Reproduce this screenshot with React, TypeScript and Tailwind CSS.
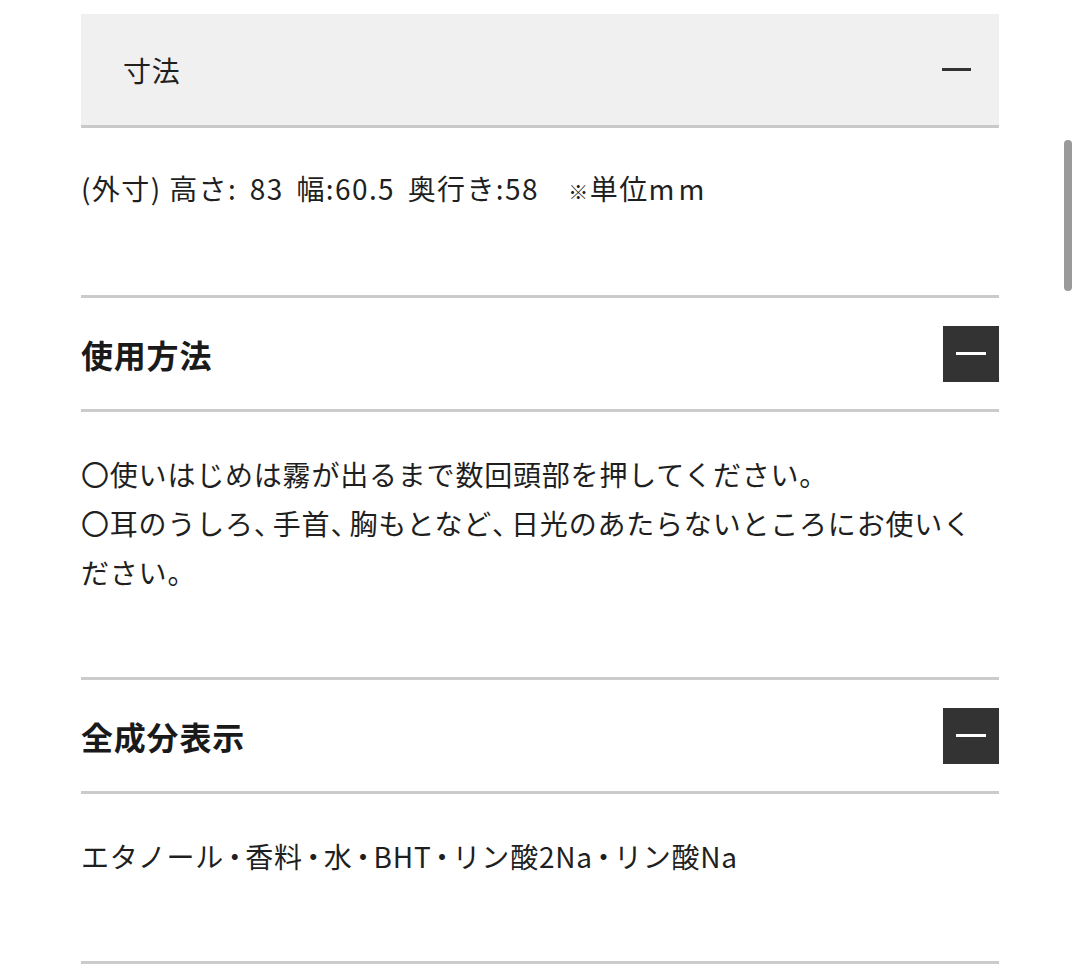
import React from 'react';

const font = { fontFamily: '"Noto Sans CJK JP", "Noto Sans", sans-serif' };

// narrow punctuation, like the proportional 、 and ・ of the page font
const Ten: React.FC = () => (
  <span className="inline-block w-[19px] tracking-normal [font-feature-settings:'halt']">、</span>
);
const Dot: React.FC = () => (
  <span className="inline-block w-[21px] text-center tracking-normal [font-feature-settings:'halt']">・</span>
);

const MinusBox: React.FC = () => (
  <div className="w-[56px] h-[56px] bg-[#333333] flex items-center justify-center">
    <span className="block w-[30px] h-[3px] bg-white" />
  </div>
);

interface SectionProps {
  title: string;
  children: React.ReactNode;
}

const Section: React.FC<SectionProps> = ({ title, children }) => (
  <div>
    <div className="h-[114px] flex items-center justify-between border-b-[3px] border-[#cbcbcb]">
      <h3 className="text-[32px] font-bold tracking-[0.8px] text-[#1a1a1a]">{title}</h3>
      <MinusBox />
    </div>
    <div className="pt-[38px] pb-[80px] text-[28px] leading-[49px] tracking-[0.8px] text-[#1f1f1f] border-b-[3px] border-[#cbcbcb]">
      {children}
    </div>
  </div>
);

const App: React.FC = () => {
  return (
    <div className="relative w-[1080px] h-[970px] overflow-hidden bg-white" style={font}>
      <div className="px-[81px] pt-[14px]">
        {/* 寸法 */}
        <div>
          <div className="h-[114px] bg-[#f0f0f0] pl-[42px] pr-[28px] flex items-center justify-between border-b-[3px] border-[#c9c9c9]">
            <h3 className="text-[28px] font-normal tracking-[0.7px] text-[#1f1f1f]">寸法</h3>
            <span className="block w-[29px] h-[3px] bg-[#333333]" />
          </div>
          <div className="pt-[36px] pb-[79px] text-[28px] leading-[49px] tracking-[1.4px] text-[#1f1f1f] border-b-[3px] border-[#cbcbcb]">
            (外寸) <span className="[word-spacing:5px]">高さ: 83 幅:60.5 奥行き:58</span>　<span className="text-[20px]">※</span>単位<span className="tracking-[4px]">mm</span>
          </div>
        </div>

        <Section title="使用方法">
          <p>〇使いはじめは霧が出るまで数回頭部を押してください。</p>
          <p>
            〇耳のうしろ<Ten />手首<Ten />胸もとなど<Ten />日光のあたらないところにお使いください。
          </p>
        </Section>

        <Section title="全成分表示">
          <p>
            エタノール<Dot />香料<Dot />水<Dot />BHT<Dot />リン酸2Na<Dot />リン酸Na
          </p>
        </Section>
      </div>

      {/* scrollbar overlay */}
      <div className="absolute left-[1064px] top-[140px] w-[8px] h-[151px] rounded-full bg-[#9a9a9a]" />
    </div>
  );
};

export default App;
